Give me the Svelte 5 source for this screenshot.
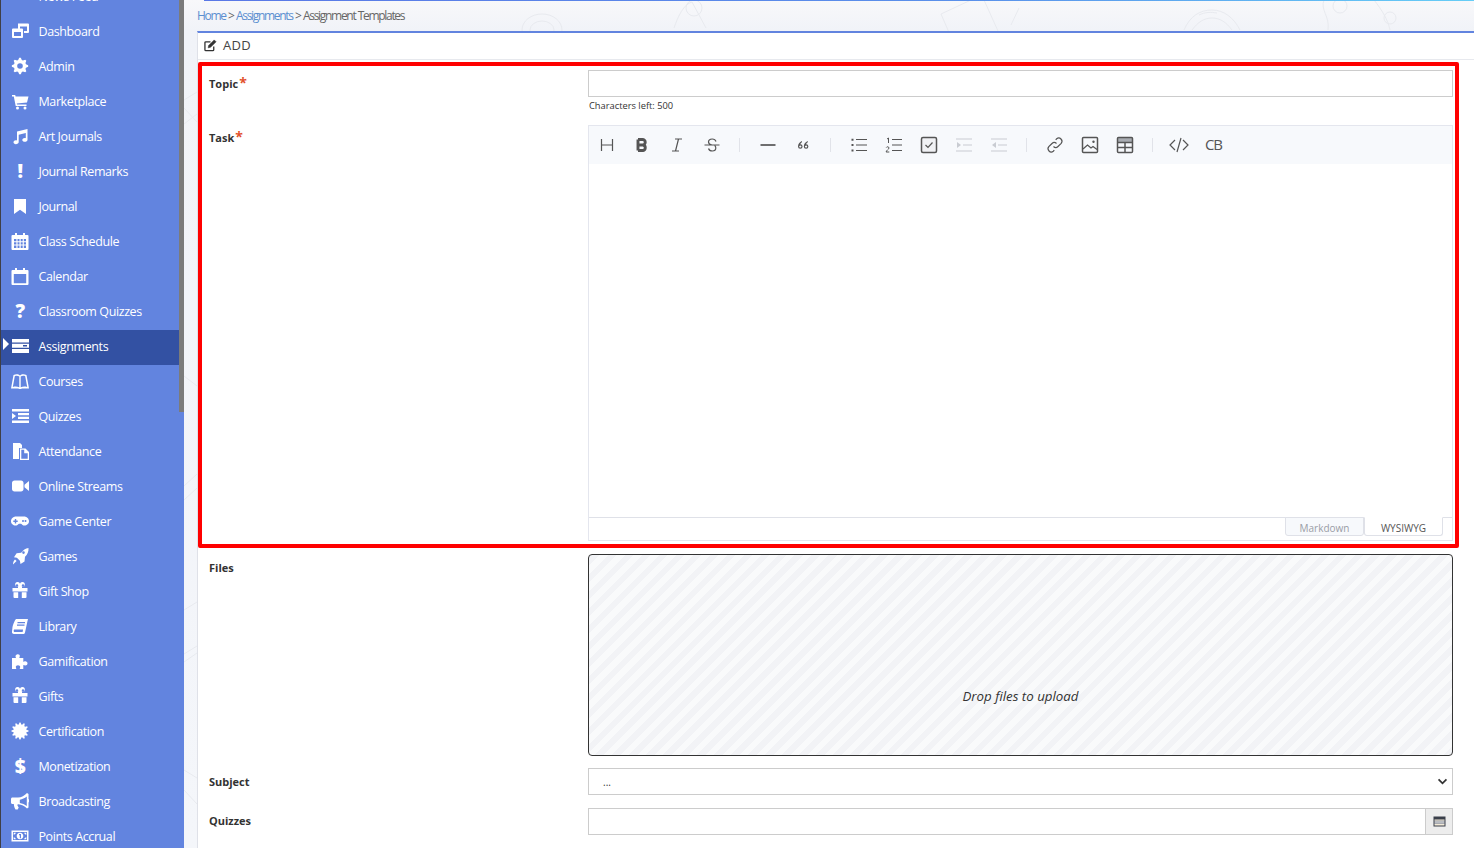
<script>
	function gear(teeth, outer, inner) {
		let d = '';
		const step = (Math.PI * 2) / (teeth * 4);
		for (let i = 0; i < teeth * 4; i++) {
			const r = i % 4 < 2 ? outer : inner;
			const a = (i - 0.5) * step;
			d += (i ? 'L' : 'M') + (9 + r * Math.cos(a)).toFixed(2) + ' ' + (9 + r * Math.sin(a)).toFixed(2);
		}
		return d + 'z';
	}

	const cog = gear(8, 8.2, 6.2) + 'M9 6.2a2.8 2.8 0 1 0 0 5.6a2.8 2.8 0 1 0 0-5.6z';
	const giftIcon =
		'M1.5 6H7V4.8A2.4 2.4 0 1 1 9 2.6a2.4 2.4 0 1 1 2 2.2V6h5.5v3.4h-15zM7.2 4.6V3.4a1.2 1.2 0 1 0-1.2 1.2zM10.8 4.6H12a1.2 1.2 0 1 0-1.2-1.2zM2.5 10.2h4.7V16H3.5a1 1 0 0 1-1-1zM10.8 10.2h4.7V15a1 1 0 0 1-1 1h-3.7z';

	const menu = [
		{ label: 'News Feed', icon: 'M2 3h3v3H2zM7 3h3v3H7zM12 3h3v3h-3zM2 8h3v3H2zM7 8h3v3H7zM12 8h3v3h-3z' },
		{ label: 'Dashboard', icon: 'M7 1.500h10a1 1 0 0 1 1 1v7.500a1 1 0 0 1-1 1h-4V9h3V4.500H9v2H7zM2 6.500h9a1 1 0 0 1 1 1v7.500a1 1 0 0 1-1 1H2a1 1 0 0 1-1-1V7.500a1 1 0 0 1 1-1zM3 10v4h7v-4z' },
		{ label: 'Admin', icon: cog },
		{ label: 'Marketplace', icon: 'M1 3h3.200l.4 1.500H17.500L16 10.500l-10.200 1 .2 1H15.500V14H4.700L2.800 4.500H1zM6.500 14.500a1.500 1.500 0 1 0 0 3a1.500 1.500 0 1 0 0-3zM14 14.500a1.500 1.500 0 1 0 0 3a1.500 1.500 0 1 0 0-3z' },
		{ label: 'Art Journals', icon: 'M6 4.500L16.500 2v10.700c0 1.300-1.300 2.100-2.700 2.100s-2.500-.7-2.500-1.800c0-1.200 1.200-2 2.500-2 .4 0 .8.100 1 .2V6L7.700 7.700V15c0 1.300-1.300 2.200-2.800 2.200S2.500 16.400 2.500 15.300c0-1.200 1.100-2 2.400-2 .4 0 .8 0 1.100.2z' },
		{ label: 'Journal Remarks', glyph: '!' },
		{ label: 'Journal', icon: 'M3 2h12v15l-6-4.200L3 17z' },
		{ label: 'Class Schedule', icon: 'M4 1h2v2h6V1h2v2h2.500a1 1 0 0 1 1 1v13a1 1 0 0 1-1 1h-15a1 1 0 0 1-1-1V4a1 1 0 0 1 1-1H4zM3 7v2.200h2.400V7zM6.500 7v2.200h2V7zM9.700 7v2.200h2V7zM12.800 7v2.200H15V7zM3 10.300v2.200h2.400v-2.200zM6.500 10.300v2.200h2v-2.200zM9.700 10.300v2.200h2v-2.200zM12.800 10.300v2.200H15v-2.200zM3 13.600v2.400h2.400v-2.400zM6.500 13.600v2.400h2v-2.400zM9.700 13.600v2.400h2v-2.400zM12.800 13.600v2.400H15v-2.400z' },
		{ label: 'Calendar', icon: 'M4 1h2v2h6V1h2v2h2.500a1 1 0 0 1 1 1v13a1 1 0 0 1-1 1h-15a1 1 0 0 1-1-1V4a1 1 0 0 1 1-1H4zM2.800 7v9.200h12.400V7z' },
		{ label: 'Classroom Quizzes', glyph: '?' },
		{ label: 'Assignments', active: true, icon: 'M1 2h17v3.500H1zM1 6.800h17v4H1zM12 8v1.400h4V8zM1 12h17v4H1z' },
		{ label: 'Courses', icon: 'M2.500 3C5 1.800 7.500 2 9 3.500 10.500 2 13 1.800 15.500 3l2.500 13.500h-7c-.5.600-3.500.600-4 0H0zM3.800 4.200L1.800 15c2.300-.6 4.500-.5 6.500.3V4.600c-1.200-.8-3-1-4.500-.4zM14.200 4.200c-1.500-.6-3.300-.4-4.500.4v10.700c2-.8 4.200-.9 6.500-.3z' },
		{ label: 'Quizzes', icon: 'M1 2h17v2.400H1zM7 6h11v2.200H7zM7 9.800h11V12H7zM1 6l4 3-4 3zM1 13.600h17V16H1z' },
		{ label: 'Attendance', icon: 'M2 1h7l2 2v3H8v11H2zM9 6.500h5.500L18 10v8H9zM10.300 7.800v9h6.400v-5.600h-3.500V7.800z' },
		{ label: 'Online Streams', icon: 'M1 6c0-1.500 1-2.500 2.500-2.500h6.500c1.500 0 2.500 1 2.500 2.500v6c0 1.500-1 2.500-2.500 2.500H3.500C2 14.500 1 13.500 1 12zM13.500 7.800L18 4v10l-4.500-3.800z' },
		{ label: 'Game Center', icon: 'M5 4.500h8c2.800 0 5 2.200 5 4.700s-2.200 4.300-4.500 4.300c-1.600 0-2.500-1-3.500-1.800H8C7 12.500 6.100 13.500 4.500 13.500 2.200 13.500 0 11.700 0 9.200s2.200-4.700 5-4.700zM3.800 7v1.500H2.300v1.400h1.500v1.500h1.400V9.900h1.500V8.500H5.200V7zM12 8a1 1 0 1 0 0 2a1 1 0 1 0 0-2zM14.500 8a1 1 0 1 0 0 2a1 1 0 1 0 0-2z' },
		{ label: 'Games', icon: 'M17.500 1c.3 3.500-1 6.500-3.500 8.800l-.5 4.700-4 2.500-.6-3.300-3-3L3 10.200l2.600-4 4.600-.4C12 3 14.500 1.200 17.500 1zM12.500 4.300a1.300 1.300 0 1 0 0 2.600a1.300 1.300 0 1 0 0-2.600zM4 12.500l1.600 1.600L2 17.500c0-2 .6-3.800 2-5z' },
		{ label: 'Gift Shop', icon: giftIcon },
		{ label: 'Library', icon: 'M5 2h12l-.5 2-2.500 11.500c-.2 1-1 1.500-2 1.500H3c-1.500 0-2.300-1-2-2.500L1.500 10C2 8 3.500 3.500 5 2zM6.500 5v1.200h7.500V5zM6 7.500v1.200h7.500V7.500zM3.500 12.500c-.5 0-.8.500-.8 1.200s.3 1.400.8 1.400H11.500c.5-.8.400-1.800.5-2.600z' },
		{ label: 'Gamification', icon: 'M6 2.500C7.500 2 9 2.700 8.800 4.200 8.700 5 8.300 5.500 8.300 6h4v3.800c.7 0 1.200-.6 2-.6 1.300 0 2.200 1 2.200 2.200s-1 2-2.200 2c-.8 0-1.300-.5-2-.5V17H8.700c0-.8.500-1.200.5-2 0-1-.9-1.800-2.200-1.800S4.800 14 4.800 15c0 .8.500 1.200.5 2H1V6h4c0-.6-.5-1-.5-1.800S5 3 6 2.500z' },
		{ label: 'Gifts', icon: giftIcon },
		{ label: 'Certification', icon: gear(12, 8.600, 6.600) },
		{ label: 'Monetization', glyph: '$' },
		{ label: 'Broadcasting', icon: 'M16 1l1.500 1v5c.6.400 1 1 1 1.700s-.4 1.300-1 1.700V15.500L16 16.500c-2.500-2.500-5.500-3.800-8.500-4.200-1-.2-1.400.500-1 1.300.3.800.7 1.400 1.200 2l-1 2H4.500C3.500 16 3 14.300 2.800 12H1.500C.6 12 0 11.300 0 10.500v-3.500C0 6.200.6 5.500 1.500 5.500H7c3.500 0 6.500-1.800 9-4.500zM15.800 4.500C13.700 6.200 11.300 7.300 8.800 7.700v3.200c2.500.4 4.900 1.500 7 3.100z' },
		{ label: 'Points Accrual', icon: 'M.5 3.500h17v11H.5zM2 5v8h14V5zM9 5.700c-2 0-3.300 1.500-3.300 3.300s1.300 3.300 3.300 3.300 3.300-1.500 3.300-3.300S11 5.700 9 5.700zM8 7h2v4.300H8.800V8.200H8zM2.700 5.700h2.200c-.3 1-1.100 1.800-2.200 2zM13.100 5.700h2.200v2c-1.100-.2-1.900-1-2.200-2zM2.700 10.300c1.100.2 1.900 1 2.200 2H2.700zM15.300 10.300v2h-2.200c.3-1 1.100-1.800 2.200-2z' }
	];

	const tabs = ['Markdown', 'WYSIWYG'];
</script>

<div class="page">
	<aside class="sidebar">
		<nav>
			{#each menu as item}
				<div class="item" class:active={item.active}>
					{#if item.active}<span class="pointer"></span>{/if}
					<span class="icon">
						{#if item.glyph}
							<span class="glyph">{item.glyph}</span>
						{:else}
							<svg viewBox="0 0 18 18" width="18" height="18"><path fill="#fff" fill-rule="evenodd" d={item.icon} /></svg>
						{/if}
					</span>
					<span class="label">{item.label}</span>
				</div>
			{/each}
		</nav>
		<div class="scroll"></div>
	</aside>

	<main class="content">
		<svg class="doodles" viewBox="0 0 1290 848" width="1290" height="848" fill="none" stroke="#e8eaef" stroke-width="1">
			<path d="M0 100l13 -8M0 124l13 -10M0 108l13 14M0 376l13 10M0 486l13 -12M0 500l13 -12M0 610l13 -8M0 654l13 -8M0 662l13 -9M0 770l13 8M0 790l13 14" />
			<ellipse cx="358" cy="30" rx="20" ry="16" />
			<ellipse cx="358" cy="30" rx="12" ry="9" />
			<path d="M490 28c4-12 10-24 18-26l14 26" />
			<circle cx="510" cy="8" r="8" />
			<path d="M757 14l30 -14M757 14l13 30M800 0l14 31M835 8l-8 17" />
			<path d="M1000 30c6-14 16-20 28-20s22 8 28 20M1008 30c6-8 12-12 20-12s14 4 20 12M1015 15c6-3 12-3 18-2" />
			<path d="M1140 0c-4 10 6 16 4 30M1190 0c8 10 14 20 16 30" />
			<circle cx="1156" cy="6" r="7" />
			<circle cx="1206" cy="18" r="6" />
		</svg>
		<div class="topline"></div>
		<div class="crumbs">
			<span class="link">Home</span> &gt; <span class="link">Assignments</span> &gt; Assignment Templates
		</div>

		<section class="card">
			<header class="card-head">
				<svg viewBox="0 0 14 14" width="13" height="13" fill="none" stroke="#333" stroke-width="1.400">
					<path d="M10.500 8v3.500a1 1 0 0 1-1 1H2a1 1 0 0 1-1-1V4a1 1 0 0 1 1-1h5" />
					<path d="M5 7l6-6 2 2-6 6-2.500.5z" fill="#333" stroke-width=".6" />
				</svg>
				<span>ADD</span>
			</header>

			<div class="form">
				<div class="row topic">
					<span class="field-label">Topic<i>*</i></span>
					<div>
						<div class="input"></div>
						<div class="hint">Characters left: 500</div>
					</div>
				</div>

				<div class="row task">
					<span class="field-label">Task<i>*</i></span>
					<div class="editor">
						<div class="toolbar">
							<div class="group">
								<span class="tool"><svg viewBox="0 0 20 20"><path d="M4.500 4v12M15.500 4v12M4.500 10h11" /></svg></span>
								<span class="tool"><svg viewBox="0 0 20 20"><path class="heavy" d="M6 4.500v11M6 4.500h4.500a2.700 2.700 0 0 1 0 5.500H6M6 10h5a2.800 2.800 0 0 1 0 5.500H6" /></svg></span>
								<span class="tool"><svg viewBox="0 0 20 20"><path d="M8 4h7M5 16h7M11.500 4l-3 12" /></svg></span>
								<span class="tool"><svg viewBox="0 0 20 20"><path d="M2.500 10h15M14 6.500c-.5-1.700-2-2.500-3.800-2.500-2.200 0-3.700 1.100-3.700 3 0 1.600 1 2.500 3.500 3M6.500 13.500c.5 1.700 2 2.500 3.800 2.500 2.200 0 3.500-1.200 3.500-2.900 0-1-.4-2.100-1.200-2.600" /></svg></span>
							</div>
							<div class="group">
								<span class="tool"><svg viewBox="0 0 20 20"><path d="M2.500 10h15" stroke-width="1.700" /></svg></span>
								<span class="tool"><svg viewBox="0 0 20 20"><path class="fill" d="M9 6c-2.500 1.100-4 2.800-4 5.500a2.300 2.300 0 1 0 2.300-2.300c.2-.8.900-1.400 1.700-1.900zM14.800 6c-2.500 1.100-4 2.800-4 5.500a2.300 2.300 0 1 0 2.300-2.300c.2-.8.900-1.400 1.700-1.900z" /><path class="hole" d="M7.300 10.400a1.100 1.100 0 1 0 .01 0zM13.100 10.400a1.100 1.100 0 1 0 .01 0z" /></svg></span>
							</div>
							<div class="group">
								<span class="tool"><svg viewBox="0 0 20 20"><path d="M7 4.500h11M7 10h11M7 15.500h11" /><path class="fill" d="M2.500 3.700h2v2h-2zM2.500 9h2v2h-2zM2.500 14.500h2v2h-2z" /></svg></span>
								<span class="tool"><svg viewBox="0 0 20 20"><path d="M8 4.500h10M8 10h10M8 15.500h10" /><path class="thin" d="M3 4l1.500-1v5M2.300 12.500c.3-1 2.700-1 2.700.5 0 1.200-2.700 2.300-2.900 4H5.300" /></svg></span>
								<span class="tool"><svg viewBox="0 0 20 20"><rect class="soft" x="2.500" y="2.500" width="15" height="15" rx="1.500" stroke-width="1.500" /><path d="M6.500 10l2.500 2.500 4.500-5" /></svg></span>
								<span class="tool muted"><svg viewBox="0 0 20 20"><path d="M2 4h16M9 10h9M2 16h16" /><path class="fill" d="M3 7l4 3-4 3z" /></svg></span>
								<span class="tool muted"><svg viewBox="0 0 20 20"><path d="M2 4h16M9 10h9M2 16h16" /><path class="fill" d="M7 7l-4 3 4 3z" /></svg></span>
							</div>
							<div class="group tight">
								<span class="tool"><svg viewBox="0 0 20 20"><path d="M8.500 11.500a3.200 3.200 0 0 0 4.500 0l3.200-3.200a3.200 3.200 0 0 0-4.500-4.500l-1 1M11.500 8.500a3.200 3.200 0 0 0-4.500 0l-3.200 3.200a3.200 3.200 0 0 0 4.500 4.500l1-1" /></svg></span>
								<span class="tool"><svg viewBox="0 0 20 20"><rect x="2.500" y="2.500" width="15" height="15" rx="1" stroke-width="1.500" /><path d="M3 14l4.500-4 3.500 3 2-1.500 4 3" /><circle class="fill" cx="13.500" cy="6.800" r="1.200" /></svg></span>
								<span class="tool"><svg viewBox="0 0 20 20"><path class="fill tone" d="M2.500 2.500h15v5h-15z" /><rect x="2.500" y="2.500" width="15" height="15" rx="1" stroke-width="1.500" /><path d="M2.500 7.500h15M2.500 12.500h15M10 7.500v10" stroke-width="1.500" /></svg></span>
							</div>
							<div class="group last">
								<span class="tool"><svg viewBox="0 0 20 20"><path d="M6 5l-5 5 5 5M14 5l5 5-5 5M12 3l-4 14" /></svg></span>
								<span class="tool cb">CB</span>
							</div>
						</div>
						<div class="writing"></div>
						<div class="modes">
							{#each tabs as tab, i}
								<span class="mode" class:on={i === 1}>{tab}</span>
							{/each}
						</div>
					</div>
				</div>

				<div class="row files">
					<span class="field-label">Files</span>
					<div class="drop"><em>Drop files to upload</em></div>
				</div>

				<div class="row subject">
					<span class="field-label">Subject</span>
					<div class="input select">
						<span class="dots">...</span>
						<svg viewBox="0 0 12 8" width="11" height="7"><path d="M1.500 1.500L6 6l4.500-4.500" fill="none" stroke="#333" stroke-width="2" /></svg>
					</div>
				</div>

				<div class="row quizzes">
					<span class="field-label">Quizzes</span>
					<div class="input group-input">
						<div class="addon">
							<svg viewBox="0 0 13 11" width="13" height="11"><path fill="#3a3f4a" d="M.5 .5h12v10H.5z" /><path fill="#f2ead8" d="M1.500 3.500h10v1.300h-10zM1.500 7.800h10v1.700h-10z" /><path fill="#b9bcc2" d="M1.500 4.800h10V7.800h-10z" /></svg>
						</div>
					</div>
				</div>

				<div class="highlight"></div>
			</div>
		</section>
	</main>
</div>

<style>
	:global(body) {
		margin: 0;
		overflow: hidden;
	}

	.page {
		display: flex;
		width: 1474px;
		height: 848px;
		overflow: hidden;
		font-family: "Open Sans", "Noto Sans", sans-serif;
		color: #333;
	}

	.sidebar {
		position: relative;
		flex: 0 0 184px;
		background: #6284df;
		border-left: 1px solid #3f3f46;
		box-sizing: border-box;
		overflow: hidden;
	}

	nav {
		margin-top: -20px;
	}

	.item {
		position: relative;
		display: flex;
		align-items: center;
		box-sizing: border-box;
		height: 35px;
		padding: 0 0 3px 10px;
		color: #fff;
		font-size: 12.500px;
		letter-spacing: -0.4px;
	}

	.item.active {
		background: #3351a3;
		margin-right: 5px;
	}

	.pointer {
		position: absolute;
		left: 2px;
		top: 8px;
		border-left: 6px solid #fff;
		border-top: 6px solid transparent;
		border-bottom: 6px solid transparent;
	}

	.icon {
		display: flex;
		justify-content: center;
		align-items: center;
		width: 18px;
		height: 18px;
		margin-right: 9.500px;
		flex: none;
	}

	.glyph {
		font-size: 19px;
		font-weight: 800;
		line-height: 18px;
		font-family: "Open Sans", sans-serif;
	}

	.scroll {
		position: absolute;
		right: 0;
		top: 0;
		width: 5px;
		height: 412px;
		background: #7b7b7b;
	}

	.content {
		position: relative;
		flex: 1;
		min-width: 0;
		padding-left: 13px;
		background: linear-gradient(#f8f8fa, #f1f3f8 30px, #f4f6fa);
	}

	.doodles {
		position: absolute;
		left: 0;
		top: 0;
	}

	.topline {
		position: absolute;
		left: 20px;
		right: 0;
		top: 0;
		height: 1px;
		background: linear-gradient(90deg, #5a78e6, #5a90ea 60%, #66cdf6);
	}

	.crumbs {
		position: relative;
		height: 31px;
		line-height: 32px;
		font-size: 12px;
		letter-spacing: -1.3px;
		word-spacing: 0.500px;
		color: #666;
	}

	.link {
		color: #5b8fd0;
	}

	.card {
		position: relative;
		background: #fff;
		border-top: 2px solid #6284df;
		border-left: 1px solid #dfe1e8;
		height: 820px;
		box-sizing: border-box;
	}

	.card-head {
		display: flex;
		align-items: center;
		gap: 6px;
		padding: 0 0 2px 6px;
		height: 24px;
		border-bottom: 1px solid #e7e9ee;
		font-size: 13px;
		letter-spacing: 0.3px;
		color: #444;
	}

	.form {
		position: relative;
		padding: 10px 21px 0 0;
	}

	.row {
		display: grid;
		grid-template-columns: 390px 1fr;
	}

	.field-label {
		padding-left: 11px;
		font-size: 11px;
		font-weight: 700;
		line-height: 16px;
		color: #333;
	}

	.field-label i {
		color: #e2512d;
		font-style: normal;
		font-size: 14px;
		margin-left: 1px;
	}

	.topic {
		height: 55px;
	}

	.topic .field-label {
		padding-top: 5px;
	}

	.task .field-label {
		padding-top: 4px;
	}

	.input {
		height: 27px;
		box-sizing: border-box;
		border: 1px solid #ccc;
		background: #fff;
	}

	.hint {
		margin-top: 2px;
		padding-left: 1px;
		font-size: 9.300px;
		line-height: 13px;
		color: #333;
	}

	.editor {
		height: 416px;
		box-sizing: border-box;
		border: 1px solid #e4e6ee;
		display: flex;
		flex-direction: column;
	}

	.toolbar {
		display: flex;
		align-items: center;
		height: 38px;
		background: #f7f9fc;
		flex: none;
	}

	.group {
		display: flex;
		padding-right: 11px;
		margin-right: 10px;
		position: relative;
	}

	.group.tight {
		margin-right: 8px;
	}

	.group::after {
		content: "";
		position: absolute;
		right: 0;
		top: 9px;
		height: 14px;
		width: 1px;
		background: #e1e3e9;
	}

	.group.last::after {
		display: none;
	}

	.tool {
		display: flex;
		align-items: center;
		justify-content: center;
		width: 35px;
		height: 32px;
	}

	.tool svg {
		width: 20px;
		height: 20px;
		fill: none;
		stroke: #555;
		stroke-width: 1.200;
	}

	.tool .heavy {
		stroke-width: 2.900;
	}

	.tool .soft {
		fill: #f0f1f4;
	}

	.tool .fill {
		fill: #555;
		stroke: none;
	}

	.tool .hole {
		fill: #f7f9fc;
		stroke: none;
	}

	.tool .fill.tone {
		fill: #a9acb2;
	}

	.tool .thin {
		stroke-width: 1;
	}

	.tool.muted svg {
		stroke: #c9ccd2;
	}

	.tool.muted .fill {
		fill: #c9ccd2;
	}

	.cb {
		padding-bottom: 2px;
		box-sizing: border-box;
		font-size: 15px;
		color: #555;
		letter-spacing: -1px;
	}

	.writing {
		flex: 1;
	}

	.modes {
		display: flex;
		justify-content: flex-end;
		height: 19px;
		padding-right: 9px;
		margin-bottom: 3px;
		border-top: 1px solid #dfe1e8;
		font-size: 10px;
	}

	.mode {
		width: 79px;
		box-sizing: border-box;
		text-align: center;
		line-height: 21px;
		color: #9a9da6;
		background: #f7f9fc;
		border: 1px solid #dfe1e8;
		border-radius: 0 0 3px 3px;
		height: 19px;
		margin-top: -1px;
	}

	.mode.on {
		color: #555;
		background: #fff;
		border-top-color: #fff;
	}

	.task {
		margin-bottom: 13px;
	}

	.drop {
		display: flex;
		justify-content: center;
		height: 202px;
		box-sizing: border-box;
		padding-top: 132px;
		border: 1px solid #333;
		border-radius: 4px;
		font-size: 13.300px;
		line-height: 18px;
		color: #333;
		background: repeating-linear-gradient(-45deg, #f2f3f6 0 6px, #f9fafb 6px 12px);
	}

	.files .field-label {
		padding-top: 6px;
	}

	.files {
		margin-bottom: 12px;
	}

	.subject .field-label {
		padding-top: 6px;
	}

	.select {
		display: flex;
		align-items: center;
		justify-content: space-between;
		padding: 0 4px 0 14px;
		font-size: 10px;
		line-height: 27px;
	}

	.dots {
		padding-top: 2px;
	}

	.subject {
		margin-bottom: 13px;
	}

	.quizzes .field-label {
		padding-top: 5px;
	}

	.group-input {
		display: flex;
		justify-content: flex-end;
	}

	.addon {
		display: flex;
		align-items: center;
		justify-content: center;
		box-sizing: border-box;
		width: 27px;
		background: #ededed;
		border-left: 1px solid #ccc;
	}

	.highlight {
		position: absolute;
		left: 0;
		top: 2px;
		width: 1261px;
		height: 486px;
		box-sizing: border-box;
		border: 4px solid #ff0000;
		border-radius: 2px;
		pointer-events: none;
	}
</style>
